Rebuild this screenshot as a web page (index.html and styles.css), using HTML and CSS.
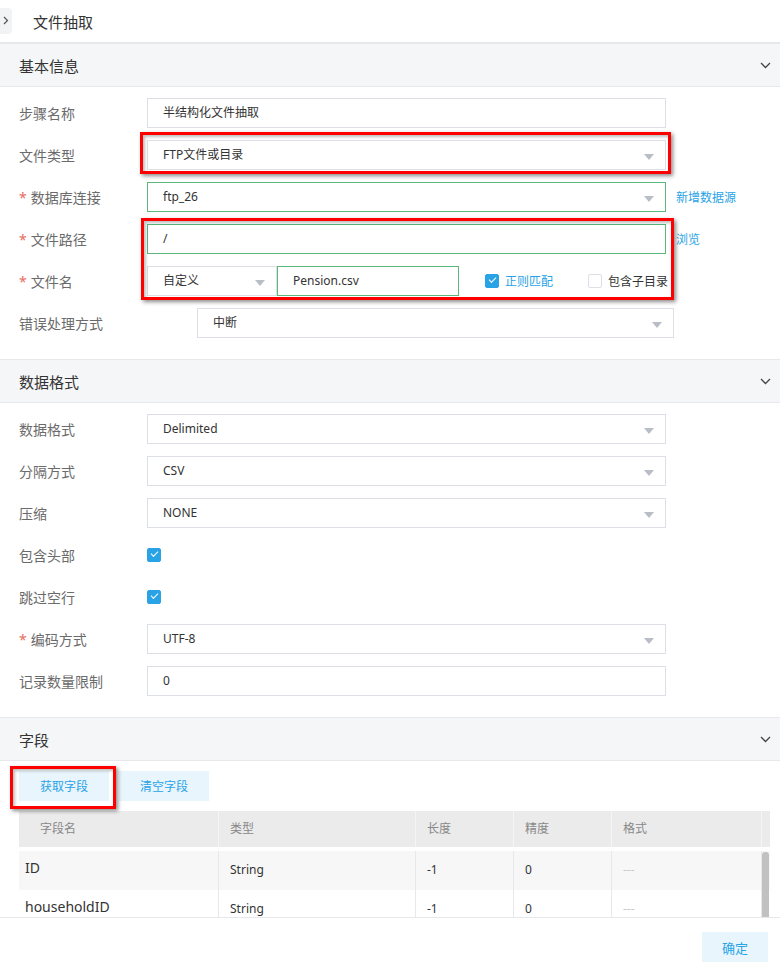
FILE: index.html
```html
<!DOCTYPE html>
<html lang="zh">
<head>
  <meta charset="UTF-8">
  <title>文件抽取</title>
  <link rel="stylesheet" href="styles.css">
</head>
<body>
  <div class="page">
    <div class="main">
      <div class="topbar">
        <span class="toggle"><svg width="6" height="9" viewBox="0 0 6 9"><path d="M1 1l3.5 3.5L1 8" fill="none" stroke="#555" stroke-width="1.2"/></svg></span>
        <span class="title">文件抽取</span>
      </div>

      <div class="panel-head">
        <span>基本信息</span>
        <svg class="chev" width="11" height="7" viewBox="0 0 11 7"><path d="M1 1l4.5 4.5L10 1" fill="none" stroke="#444" stroke-width="1.3"/></svg>
      </div>
      <div class="panel-body">
        <div class="row">
          <div class="label">步骤名称</div>
          <div class="field">半结构化文件抽取</div>
        </div>
        <div class="row">
          <div class="label">文件类型</div>
          <div class="field select">FTP文件或目录<i class="arrow"></i></div>
        </div>
        <div class="row">
          <div class="label"><b class="req">*</b>数据库连接</div>
          <div class="field select ok">ftp_26<i class="arrow"></i></div>
          <a class="link">新增数据源</a>
        </div>
        <div class="row">
          <div class="label"><b class="req">*</b>文件路径</div>
          <div class="field ok">/</div>
          <a class="link">浏览</a>
        </div>
        <div class="row">
          <div class="label"><b class="req">*</b>文件名</div>
          <div class="field select small">自定义<i class="arrow"></i></div>
          <div class="field ok name">Pension.csv</div>
          <span class="check on first"></span><span class="check-text blue">正则匹配</span>
          <span class="check second"></span><span class="check-text">包含子目录</span>
        </div>
        <div class="row">
          <div class="label wide">错误处理方式</div>
          <div class="field select err">中断<i class="arrow"></i></div>
        </div>
      </div>

      <div class="panel-head">
        <span>数据格式</span>
        <svg class="chev" width="11" height="7" viewBox="0 0 11 7"><path d="M1 1l4.5 4.5L10 1" fill="none" stroke="#444" stroke-width="1.3"/></svg>
      </div>
      <div class="panel-body">
        <div class="row">
          <div class="label">数据格式</div>
          <div class="field select">Delimited<i class="arrow"></i></div>
        </div>
        <div class="row">
          <div class="label">分隔方式</div>
          <div class="field select">CSV<i class="arrow"></i></div>
        </div>
        <div class="row">
          <div class="label">压缩</div>
          <div class="field select">NONE<i class="arrow"></i></div>
        </div>
        <div class="row">
          <div class="label">包含头部</div>
          <span class="check on"></span>
        </div>
        <div class="row">
          <div class="label">跳过空行</div>
          <span class="check on"></span>
        </div>
        <div class="row">
          <div class="label"><b class="req">*</b>编码方式</div>
          <div class="field select">UTF-8<i class="arrow"></i></div>
        </div>
        <div class="row">
          <div class="label">记录数量限制</div>
          <div class="field">0</div>
        </div>
      </div>

      <div class="panel-head">
        <span>字段</span>
        <svg class="chev" width="11" height="7" viewBox="0 0 11 7"><path d="M1 1l4.5 4.5L10 1" fill="none" stroke="#444" stroke-width="1.3"/></svg>
      </div>
      <div class="fields-body">
        <div class="tools">
          <button class="light-btn">获取字段</button>
          <button class="light-btn">清空字段</button>
        </div>
        <div class="grid">
          <div class="grid-head">
            <div class="c1">字段名</div>
            <div class="c2">类型</div>
            <div class="c3">长度</div>
            <div class="c4">精度</div>
            <div class="c5">格式</div>
            <div class="cs"></div>
          </div>
          <div class="grid-rows">
            <div class="grid-row odd">
              <div class="c1 name-cell">ID</div>
              <div class="c2">String</div>
              <div class="c3">-1</div>
              <div class="c4">0</div>
              <div class="c5 dash">---</div>
            </div>
            <div class="grid-row">
              <div class="c1 name-cell">householdID</div>
              <div class="c2">String</div>
              <div class="c3">-1</div>
              <div class="c4">0</div>
              <div class="c5 dash">---</div>
            </div>
            <div class="scrollbar"><div class="thumb"></div></div>
          </div>
        </div>
      </div>
    </div>

    <div class="footer">
      <button class="light-btn ok-btn">确定</button>
    </div>

    <div class="mark mark-type"></div>
    <div class="mark mark-path"></div>
    <div class="mark mark-fetch"></div>
  </div>
</body>
</html>
```

FILE: styles.css
```css
body {
  margin: 0;
  font-family: "Noto Sans", "Noto Sans CJK SC", sans-serif;
  color: #333;
  background: #fff;
}

.page {
  position: relative;
  width: 780px;
  height: 968px;
  overflow: hidden;
  display: flex;
  flex-direction: column;
}

.main {
  height: 917px;
  overflow: hidden;
}

.topbar {
  height: 42px;
  border-bottom: 1px solid #e6e8eb;
  display: flex;
  align-items: center;
}

.toggle {
  width: 12px;
  height: 26px;
  margin-top: -1px;
  background: #f2f3f5;
  border-radius: 0 4px 4px 0;
  display: flex;
  align-items: center;
  justify-content: center;
}

.title {
  margin-left: 21px;
  font-size: 15px;
  color: #333;
}

.panel-head {
  height: 42px;
  background: #f5f6f8;
  border-top: 1px solid #e6e8eb;
  border-bottom: 1px solid #e6e8eb;
  display: flex;
  align-items: center;
  justify-content: space-between;
  padding: 0 9px 0 19px;
  font-size: 15px;
  color: #333;
}

.panel-body {
  padding: 11px 0 21px 19px;
  display: flex;
  flex-direction: column;
  gap: 12px;
}

.row {
  height: 30px;
  display: flex;
  align-items: center;
}

.label {
  width: 128px;
  flex: none;
  font-size: 14px;
  color: #6b6b6b;
}

.label.wide {
  width: 178px;
}

.req {
  color: #e96b5e;
  font-weight: normal;
  margin-right: 4px;
}

.field {
  position: relative;
  box-sizing: border-box;
  width: 519px;
  height: 30px;
  border: 1px solid #dcdfe6;
  padding-left: 15px;
  font-size: 12px;
  line-height: 28px;
  color: #333;
}

.field.ok {
  border-color: #5cb87a;
}

.field.small {
  width: 130px;
}

.field.name {
  width: 182px;
}

.field.err {
  width: 477px;
}

.arrow {
  position: absolute;
  right: 11px;
  top: 13px;
  width: 0;
  height: 0;
  border-left: 5px solid transparent;
  border-right: 5px solid transparent;
  border-top: 6px solid #b9bdc6;
}

.link {
  margin-left: 10px;
  font-size: 12px;
  color: #2aa3e6;
}

.check {
  box-sizing: border-box;
  width: 14px;
  height: 14px;
  border: 1px solid #dcdfe6;
  border-radius: 2px;
  position: relative;
  flex: none;
}

.check.on {
  background: #29a3e6;
  border-color: #29a3e6;
}

.check.on::after {
  content: "";
  position: absolute;
  left: 3px;
  top: 2px;
  width: 6px;
  height: 3px;
  border-left: 1.5px solid #fff;
  border-bottom: 1.5px solid #fff;
  transform: rotate(-45deg);
}

.check.first {
  margin-left: 26px;
}

.check.second {
  margin-left: 35px;
}

.check-text {
  margin-left: 6px;
  font-size: 12px;
  color: #333;
}

.check-text.blue {
  color: #2aa3e6;
}

.fields-body {
  padding: 10px 0 0 19px;
}

.tools {
  display: flex;
  gap: 10px;
}

.light-btn {
  width: 90px;
  height: 30px;
  border: none;
  background: #e8f5fd;
  color: #2aa3e6;
  font-family: inherit;
  font-size: 12px;
  padding: 0;
}

.grid {
  margin-top: 10px;
  width: 751px;
  font-size: 12px;
}

.grid-head {
  height: 36px;
  background: #ebebeb;
  display: flex;
  color: #888;
  line-height: 36px;
}

.grid-head > div {
  border-right: 1px solid #f5f5f5;
}

.grid-rows {
  position: relative;
  margin-top: 4px;
}

.grid-row {
  height: 39px;
  display: flex;
  color: #333;
}

.grid-row.odd {
  background: #f7f7f7;
}

.grid-row > div {
  border-right: 1px solid #e8e8e8;
  padding-top: 10px;
  line-height: 18px;
}

.c1 { width: 200px; box-sizing: border-box; padding-left: 21px; }
.c2 { width: 197px; box-sizing: border-box; padding-left: 11px; }
.c3 { width: 98px; box-sizing: border-box; padding-left: 11px; }
.c4 { width: 98px; box-sizing: border-box; padding-left: 11px; }
.c5 { width: 150px; box-sizing: border-box; padding-left: 11px; }
.cs { width: 8px; border-right: none !important; }

.grid-row > .name-cell {
  padding-left: 6px;
  padding-top: 7px;
  font-size: 14px;
  line-height: 20px;
}

.grid-row > .dash {
  color: #c8c8c8;
}

.scrollbar {
  position: absolute;
  right: 0;
  top: 0;
  width: 8px;
  height: 80px;
}

.thumb {
  margin: 1px 0 0 0;
  width: 7px;
  height: 80px;
  background: #c1c1c1;
  border-radius: 3px 3px 0 0;
}

.footer {
  flex: 1;
  border-top: 1px solid #e6e8eb;
  display: flex;
  justify-content: flex-end;
  align-items: flex-start;
  padding: 14px 12px 0 0;
}

.ok-btn {
  width: 66px;
  font-size: 13px;
}

.mark {
  position: absolute;
  border: 3px solid #ff0000;
  box-shadow: 2px 2px 4px rgba(0, 0, 0, 0.45), inset 2px 2px 3px rgba(0, 0, 0, 0.25);
}

.mark-type {
  left: 140px;
  top: 132px;
  width: 525px;
  height: 36px;
}

.mark-path {
  left: 141px;
  top: 218px;
  width: 527px;
  height: 76px;
}

.mark-fetch {
  left: 10px;
  top: 766px;
  width: 100px;
  height: 37px;
}
```
